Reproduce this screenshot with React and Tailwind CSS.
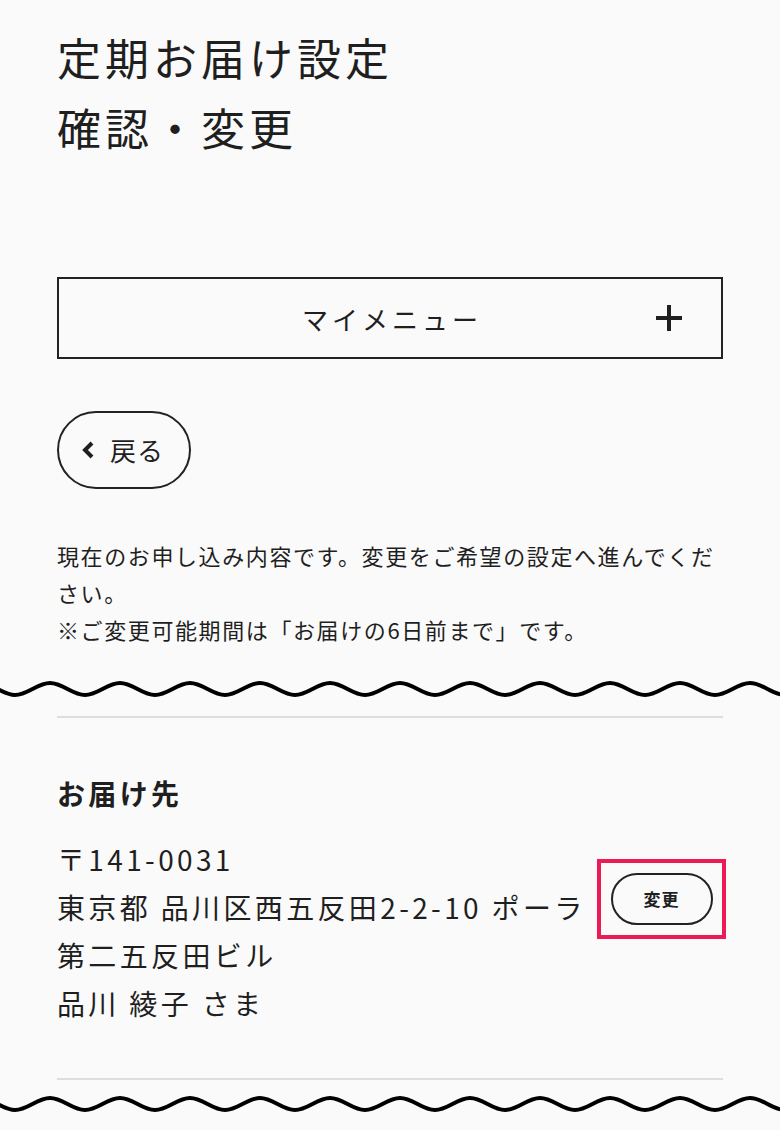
import React from "react";

function wavePath(width, c, a, period, phaseTrough) {
  const h = period / 2;
  let x = phaseTrough - period;
  let d = `M ${x} ${c + a}`;
  let down = true;
  const k = h * 0.364;
  while (x < width + period) {
    const y0 = down ? c + a : c - a;
    const y1 = down ? c - a : c + a;
    d += ` C ${x + k} ${y0}, ${x + h - k} ${y1}, ${x + h} ${y1}`;
    x += h;
    down = !down;
  }
  return d;
}

function Wave() {
  return (
    <svg width="780" height="24" viewBox="0 0 780 24" className="block w-full">
      <path d={wavePath(780, 12, 6, 70, 15)} fill="none" stroke="#000" strokeWidth="4" />
    </svg>
  );
}

export default function App() {
  const font = { fontFamily: '"Noto Sans CJK JP", "Noto Sans", sans-serif' };
  return (
    <div className="min-h-[1130px] w-[780px] bg-[#fafafa] text-[#1f1f1f] overflow-hidden" style={font}>
      <div className="px-[57px] pt-[22px]">
        <h1 className="text-[44px] leading-[70px] tracking-[4px] font-normal">
          定期お届け設定
          <br />
          確認・変更
        </h1>

        <div className="mt-[115px] h-[82px] border-2 border-[#222] grid grid-cols-[1fr_auto_1fr] items-center">
          <div />
          <div className="text-[26px] tracking-[4px] pl-[4px]">マイメニュー</div>
          <div className="flex justify-end pr-[38px]">
            <svg width="28" height="28" viewBox="0 0 28 28">
              <path d="M14 1 V27 M1 14 H27" stroke="#1f1f1f" strokeWidth="4" fill="none" />
            </svg>
          </div>
        </div>

        <div className="mt-[52px] w-[134px] h-[78px] border-2 border-[#222] rounded-full flex items-center pl-[21px] gap-[14px]">
          <svg width="16" height="20" viewBox="0 0 16 20">
            <path d="M12 3 L5 10 L12 17" stroke="#1f1f1f" strokeWidth="4" fill="none" />
          </svg>
          <span className="text-[26px] tracking-[1px] leading-none">戻る</span>
        </div>

        <p className="mt-[48px] text-[22px] leading-[37px] tracking-[1.6px] whitespace-nowrap">
          現在のお申し込み内容です。変更をご希望の設定へ進んでくだ
          <br />
          さい。
          <br />
          ※ご変更可能期間は「お届けの6日前まで」です。
        </p>
      </div>

      <div className="mt-[29px]">
        <Wave />
      </div>

      <div className="px-[57px]">
        <div className="mt-[15px] h-[2px] bg-[#dedede]" />

        <h2 className="mt-[55px] text-[28px] leading-[40px] font-bold tracking-[0.12em]">お届け先</h2>

        <div className="mt-[22px] flex justify-between items-start">
          <div className="text-[28px] leading-[48px] tracking-[0.12em] whitespace-nowrap">
            〒141-0031
            <br />
            東京都 品川区西五反田2-2-10 ポーラ
            <br />
            第二五反田ビル
            <br />
            品川 綾子 さま
          </div>
          <div className="mt-[24px] mr-[-3px] w-[129px] h-[80px] border-4 border-[#ec1a55] flex items-center justify-center">
            <div className="w-[102px] h-[52px] border-2 border-[#222] rounded-full flex items-center justify-center text-[17px] font-bold tracking-[1px]">
              変更
            </div>
          </div>
        </div>

        <div className="mt-[51px] h-[2px] bg-[#dedede]" />
      </div>

      <div className="mt-[12px]">
        <Wave />
      </div>
    </div>
  );
}
